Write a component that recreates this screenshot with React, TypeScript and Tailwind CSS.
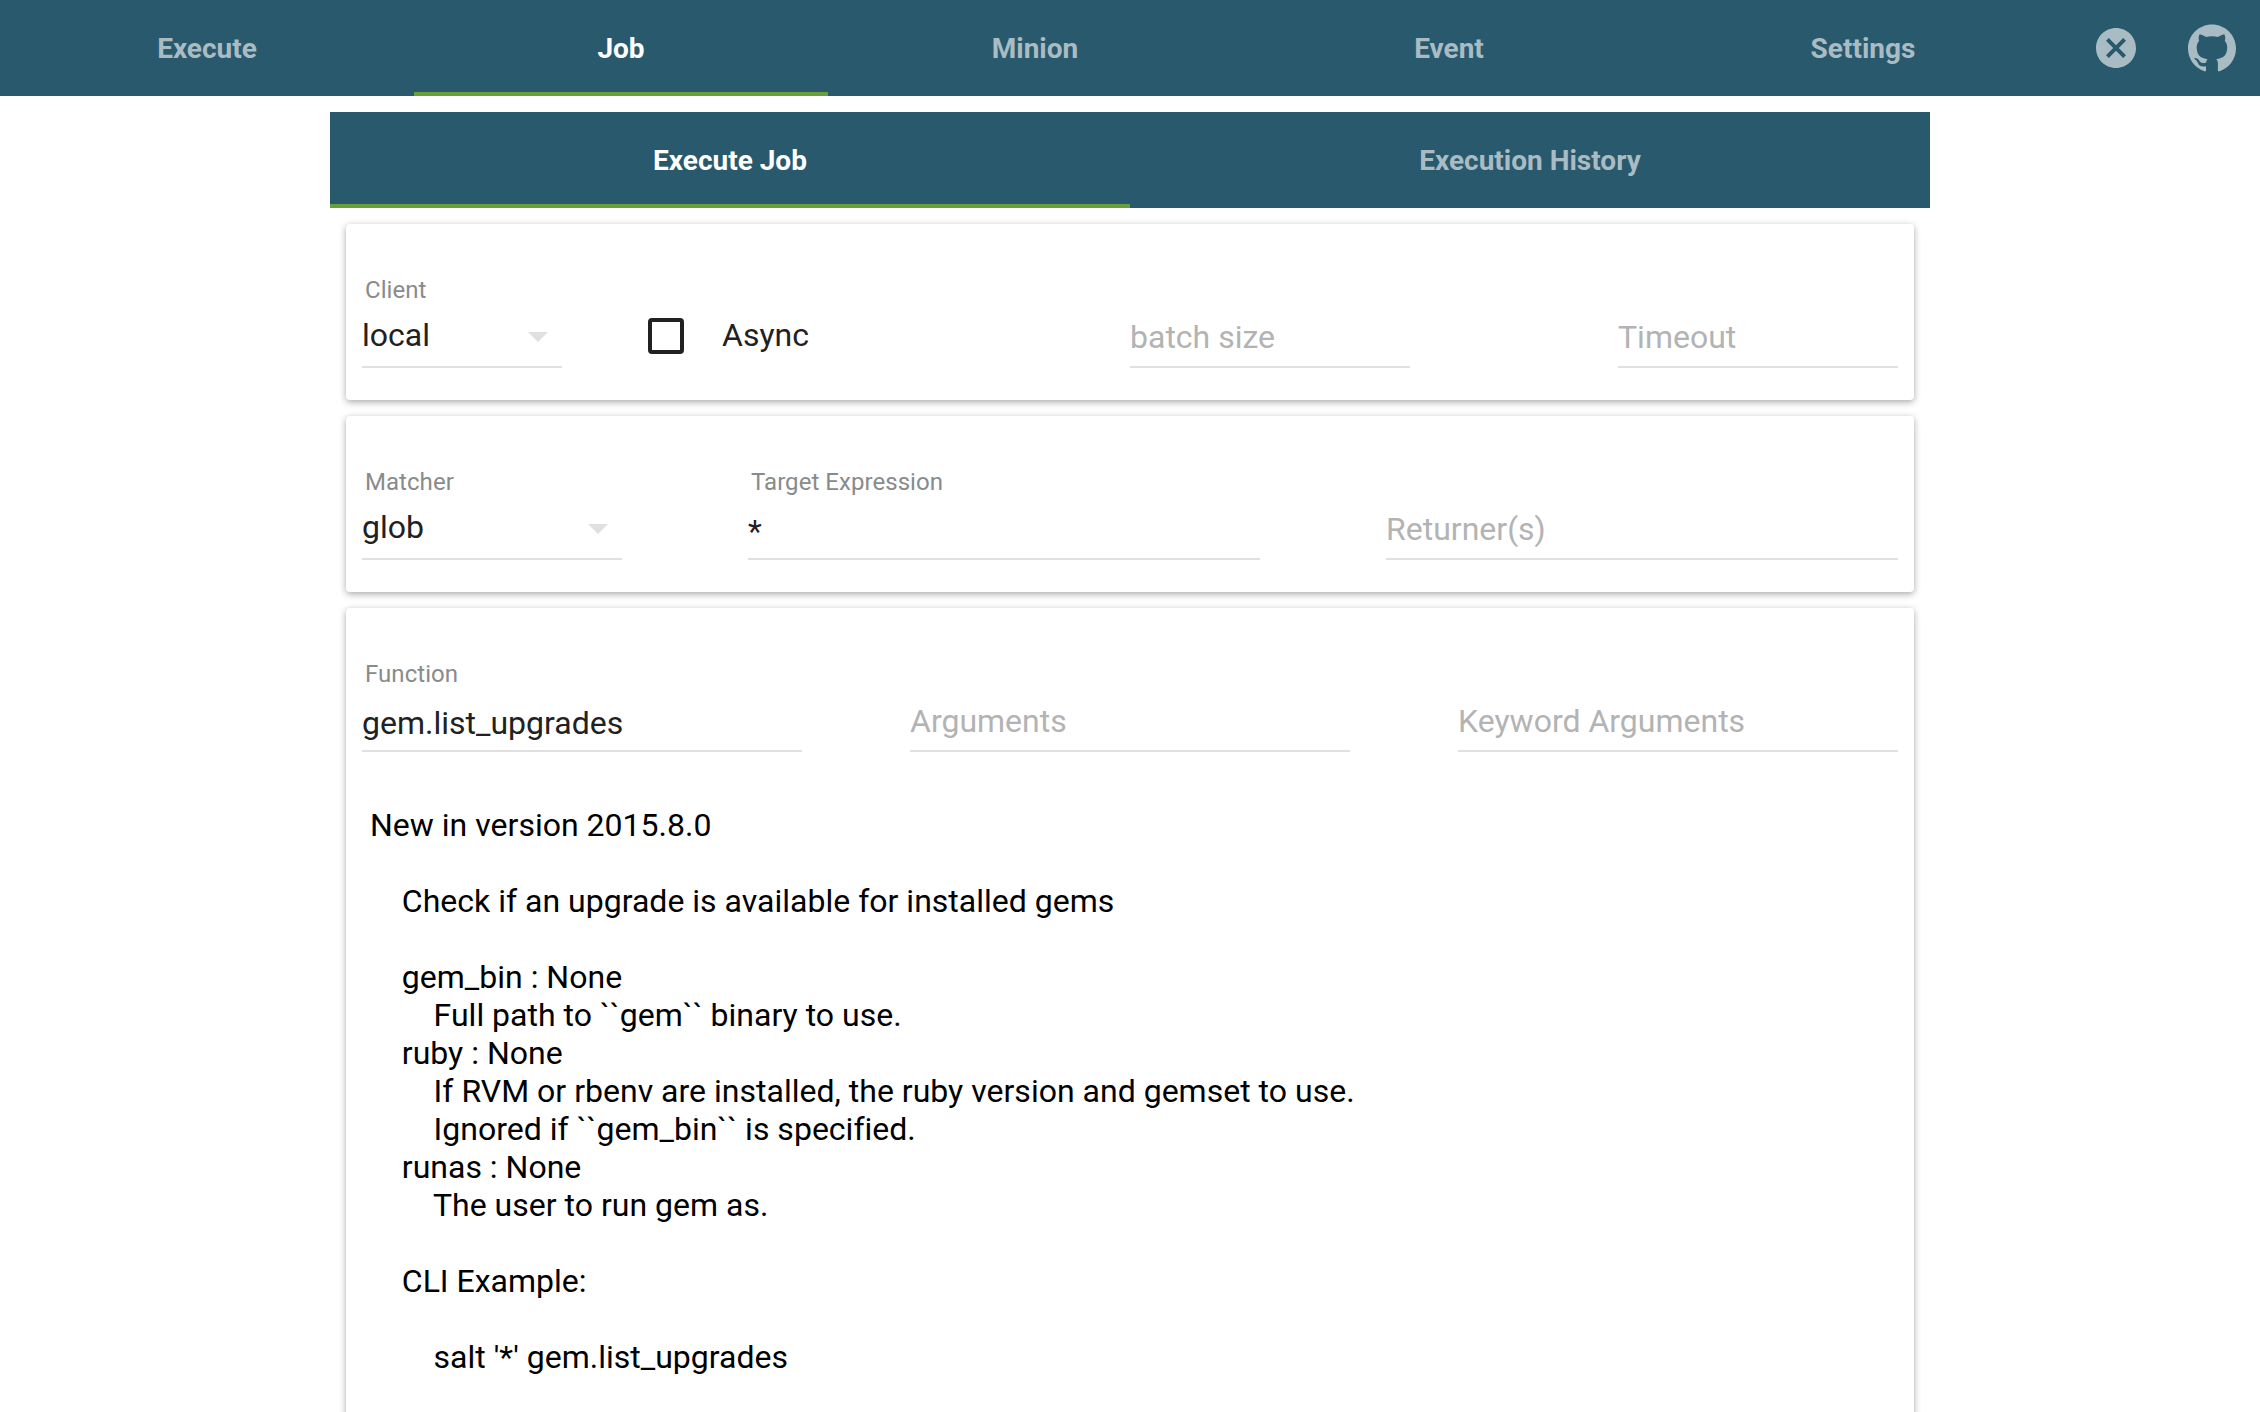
import type { ReactNode } from "react";
import { MdCancel } from "react-icons/md";
import { SiGithub } from "react-icons/si";

const mainTabs = ["Execute", "Job", "Minion", "Event", "Settings"];
const subTabs = ["Execute Job", "Execution History"];

const doc = `New in version 2015.8.0

    Check if an upgrade is available for installed gems

    gem_bin : None
        Full path to \`\`gem\`\` binary to use.
    ruby : None
        If RVM or rbenv are installed, the ruby version and gemset to use.
        Ignored if \`\`gem_bin\`\` is specified.
    runas : None
        The user to run gem as.

    CLI Example:

        salt '*' gem.list_upgrades
`;

function Tab({ label, active, className }: { label: string; active: boolean; className: string }) {
  return (
    <button
      className={`flex h-24 items-center justify-center border-b-4 pt-1.5 text-[28px] font-bold leading-none ${className} ${
        active ? "border-[#689f38] text-white" : "border-transparent text-[#a9bcc4]"
      }`}
    >
      {label}
    </button>
  );
}

function Card({ children, className = "" }: { children: ReactNode; className?: string }) {
  return (
    <section
      className={`rounded-[4px] bg-white px-4 pt-12 shadow-[0_2px_6px_0_rgba(0,0,0,0.26),0_2px_10px_0_rgba(0,0,0,0.1)] ${className}`}
    >
      {children}
    </section>
  );
}

function Field({
  label,
  value,
  placeholder,
  select,
  low,
  className,
}: {
  label?: string;
  value?: string;
  placeholder?: string;
  select?: boolean;
  low?: boolean;
  className: string;
}) {
  return (
    <div className={`flex h-24 flex-col border-b-2 border-[#e0e0e0] ${className}`}>
      <div className="h-9 pl-[3px] text-[24px] leading-9 tracking-[0.05px] text-[#888b8c]">{label}</div>
      <div className={`flex h-12 items-center justify-between text-[32px] leading-[48px] ${low ? "mt-[7px]" : "mt-[3px]"}`}>
        {value ? <span className="text-[#212121]">{value}</span> : <span className="pt-1 text-[#b3b3b3]">{placeholder}</span>}
        {select && (
          <svg className="mr-[14px] mt-1 h-[10px] w-5 fill-[#e0e0e0]" viewBox="0 0 20 10">
            <path d="M0 0h20L10 10z" />
          </svg>
        )}
      </div>
    </div>
  );
}

export default function App() {
  return (
    <div className="h-[1412px] overflow-hidden bg-white font-['Roboto',sans-serif]">
      <header className="flex h-24 items-center bg-[#29596c]">
        {mainTabs.map((t) => (
          <Tab key={t} label={t} active={t === "Job"} className="w-[414px]" />
        ))}
        <div className="flex flex-1 items-center justify-between pl-[22px] pr-6 text-[#a9bcc4]">
          <MdCancel className="size-12" />
          <SiGithub className="size-12" />
        </div>
      </header>

      <main className="mx-auto mt-4 w-[1600px]">
        <nav className="flex bg-[#29596c]">
          {subTabs.map((t, i) => (
            <Tab key={t} label={t} active={i === 0} className="flex-1" />
          ))}
        </nav>

        <div className="flex flex-col gap-4 px-4 pt-4">
          <Card className="grid h-44 grid-cols-2">
            <div className="flex gap-[86px]">
              <Field className="w-[200px]" label="Client" value="local" select />
              <label className="flex h-24 items-end gap-[38px] pb-[9px] text-[32px] leading-[48px] text-[#212121]">
                <span className="mb-[5px] size-9 rounded-[4px] border-4 border-[#212121]" />
                Async
              </label>
            </div>
            <div className="flex justify-between">
              <Field className="w-[280px]" placeholder="batch size" />
              <Field className="w-[280px]" placeholder="Timeout" />
            </div>
          </Card>

          <Card className="flex h-44 justify-between">
            <Field className="w-[260px]" label="Matcher" value="glob" select />
            <Field className="w-[512px]" label="Target Expression" value="*" low />
            <Field className="w-[512px]" placeholder="Returner(s)" />
          </Card>

          <Card className="h-[900px]">
            <div className="flex justify-between">
              <Field className="w-[440px]" label="Function" value="gem.list_upgrades" low />
              <Field className="w-[440px]" placeholder="Arguments" />
              <Field className="w-[440px]" placeholder="Keyword Arguments" />
            </div>
            <pre className="mt-[54px] pl-2 font-['Roboto',sans-serif] text-[32px] leading-[38px] tracking-[0.01px] text-black">
              {doc}
            </pre>
          </Card>
        </div>
      </main>
    </div>
  );
}
